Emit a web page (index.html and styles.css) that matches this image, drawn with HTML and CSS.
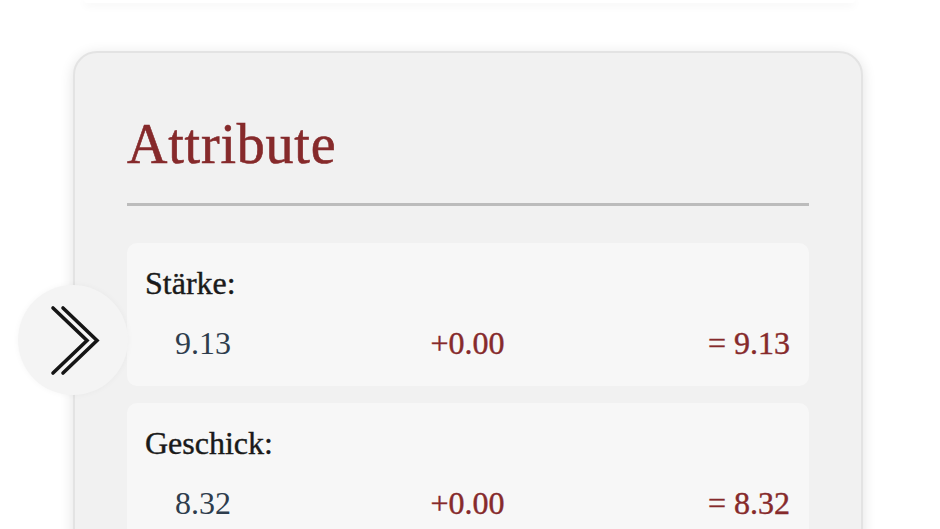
FILE: index.html
```html
<!DOCTYPE html>
<html lang="de">
<head>
  <meta charset="UTF-8">
  <title>Charakter - Attribute</title>
  <link rel="stylesheet" href="styles.css">
</head>
<body>

  <div class="karte-oben"></div>

  <section class="karte">
    <h2 class="titel">Attribute</h2>

    <div class="attribut">
      <div class="attribut-name">Stärke:</div>
      <div class="attribut-werte">
        <span class="basis">9.13</span>
        <span class="bonus">+0.00</span>
        <span class="summe">= 9.13</span>
      </div>
    </div>

    <div class="attribut">
      <div class="attribut-name">Geschick:</div>
      <div class="attribut-werte">
        <span class="basis">8.32</span>
        <span class="bonus">+0.00</span>
        <span class="summe">= 8.32</span>
      </div>
    </div>
  </section>

  <!-- Seitenleiste ausklappen -->
  <button class="seiten-btn" aria-label="Menü öffnen">
    <svg width="110" height="110" viewBox="0 0 110 110" fill="none" stroke="#151515" stroke-width="3.6" stroke-linecap="round" stroke-linejoin="miter">
      <polyline points="35,23 69,55.5 35,88" />
      <polyline points="45,23 79,55.5 45,88" />
    </svg>
  </button>

</body>
</html>
```

FILE: styles.css
```css
:root {
  --rot: #862a2b;
  --blau: #2e3d4d;
  --karte: #f1f1f1;
  --zeile: #f7f7f7;
  --linie: #bcbcbc;
}

html, body {
  overflow: hidden;
}

body {
  margin: 0;
  background: #fff;
  font-family: 'Liberation Serif', 'Times New Roman', serif;
  color: #1a1a1a;
}

/* Ende der vorherigen Karte */
.karte-oben {
  width: 771px;
  height: 3px;
  margin-left: 84px;
  background: #fff;
  border-radius: 0 0 14px 14px;
  box-shadow: 0 2px 8px rgba(0,0,0,0.08);
}

.karte {
  width: 682px;
  margin: 48px 0 0 73px;
  padding: 63px 52px 40px;
  background: var(--karte);
  border: 2px solid #e3e3e3;
  border-radius: 24px;
  box-shadow: 0 3px 14px rgba(0,0,0,0.12);
}

.titel {
  margin: 0 0 37px;
  padding-bottom: 31px;
  border-bottom: 3px solid var(--linie);
  font-size: 56px;
  line-height: 56px;
  font-weight: normal;
  letter-spacing: 0.8px;
  -webkit-text-stroke: 0.6px var(--rot);
  color: var(--rot);
}

/* ATTRIBUTE */
.attribut {
  background: var(--zeile);
  border-radius: 10px;
  padding: 20px 19px 23px 18px;
  margin-bottom: 17px;
}

.attribut-name {
  font-size: 32px;
  line-height: 40px;
  margin-bottom: 20px;
  -webkit-text-stroke: 0.4px #1a1a1a;
}

.attribut-werte {
  display: grid;
  grid-template-columns: 1fr auto 1fr;
  font-size: 32px;
  line-height: 40px;
}

.basis {
  padding-left: 30px;
  color: var(--blau);
}

.bonus {
  text-align: center;
  color: var(--rot);
  -webkit-text-stroke: 0.4px var(--rot);
}

.summe {
  text-align: right;
  color: var(--rot);
  -webkit-text-stroke: 0.4px var(--rot);
}

/* Runder Knopf am linken Rand */
.seiten-btn {
  position: absolute;
  left: 18px;
  top: 285px;
  width: 110px;
  height: 110px;
  padding: 0;
  border: none;
  border-radius: 50%;
  background: #f4f4f4;
  box-shadow: 0 0 6px rgba(0,0,0,0.04);
  cursor: pointer;
}

.seiten-btn svg {
  display: block;
}
```
